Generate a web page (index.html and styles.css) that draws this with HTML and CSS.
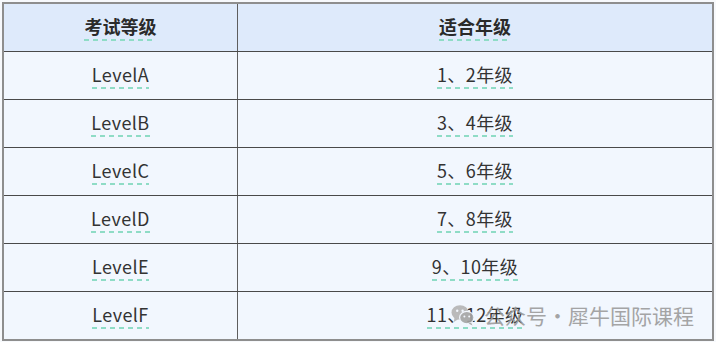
FILE: index.html
```html
<!DOCTYPE html>
<html lang="zh">
<head>
<meta charset="utf-8">
<link rel="stylesheet" href="styles.css">
</head>
<body>
<div class="page">
  <table class="grade-table">
    <colgroup><col class="c1"><col class="c2"></colgroup>
    <thead>
      <tr><th><span class="u">考试等级</span></th><th><span class="u">适合年级</span></th></tr>
    </thead>
    <tbody>
      <tr><td><span class="u">LevelA</span></td><td><span class="u">1、2年级</span></td></tr>
      <tr><td><span class="u">LevelB</span></td><td><span class="u">3、4年级</span></td></tr>
      <tr><td><span class="u">LevelC</span></td><td><span class="u">5、6年级</span></td></tr>
      <tr><td><span class="u">LevelD</span></td><td><span class="u">7、8年级</span></td></tr>
      <tr><td><span class="u">LevelE</span></td><td><span class="u">9、10年级</span></td></tr>
      <tr><td><span class="u">LevelF</span></td><td><span class="u">11、12年级</span></td></tr>
    </tbody>
  </table>
  <div class="watermark">
    <svg class="wm-icon" width="24" height="22" viewBox="0 0 24 22">
      <ellipse cx="9" cy="8.5" rx="8.5" ry="7.3" fill="#b4b4b4"/>
      <path d="M3.5 13.5 L2.8 18 L7.5 15 Z" fill="#b4b4b4"/>
      <ellipse cx="15.8" cy="13.6" rx="7.2" ry="6.2" fill="#a4a4a4" stroke="#f2f7fe" stroke-width="1.2"/>
      <path d="M20 18.5 L21.5 21.5 L17.5 19.5 Z" fill="#a4a4a4"/>
      <circle cx="6.2" cy="6.8" r="1.2" fill="#f2f7fe"/>
      <circle cx="11.6" cy="6.8" r="1.2" fill="#f2f7fe"/>
      <circle cx="13.4" cy="12.6" r="1" fill="#f2f7fe"/>
      <circle cx="18.2" cy="12.6" r="1" fill="#f2f7fe"/>
    </svg>
    <span class="wm-text">公众号·犀牛国际课程</span>
  </div>
</div>
</body>
</html>
```

FILE: styles.css
```css
html, body {
  margin: 0;
  padding: 0;
  background: #f7f9fc;
}
.page {
  position: relative;
  width: 716px;
  height: 342px;
  padding: 2px 0 0 2px;
  box-sizing: border-box;
}
.grade-table {
  border-collapse: collapse;
  width: 712px;
  font-family: "Noto Sans CJK SC", "Noto Sans", sans-serif;
  color: #333;
  border: 2px solid #8e8e8e;
}
.c1 { width: 235px; }
.c2 { width: 477px; }
.grade-table th,
.grade-table td {
  height: 47px;
  padding: 0;
  text-align: center;
  vertical-align: middle;
  border-top: 1px solid #4a4a4a;
  border-bottom: 1px solid #4a4a4a;
  border-left: 1px solid #5e5e5e;
  border-right: 1px solid #5e5e5e;
  font-size: 18px;
  line-height: 24px;
}
.grade-table th {
  background: #deeafb;
  font-weight: 700;
  color: #2a2a2a;
}
.grade-table td {
  background: #f2f7fe;
  font-weight: 400;
  letter-spacing: 0.4px;
}
.u {
  display: inline-block;
  padding-bottom: 3px;
  background: repeating-linear-gradient(90deg, #8fdcc6 0 5px, transparent 5px 9px) left bottom / 100% 2px no-repeat;
}
.watermark {
  position: absolute;
  left: 451px;
  top: 300px;
  display: flex;
  align-items: center;
  gap: 9px;
  opacity: 0.9;
}
.wm-text {
  font-family: "Noto Sans CJK SC", sans-serif;
  font-size: 21px;
  color: #9c9c9c;
}
```
